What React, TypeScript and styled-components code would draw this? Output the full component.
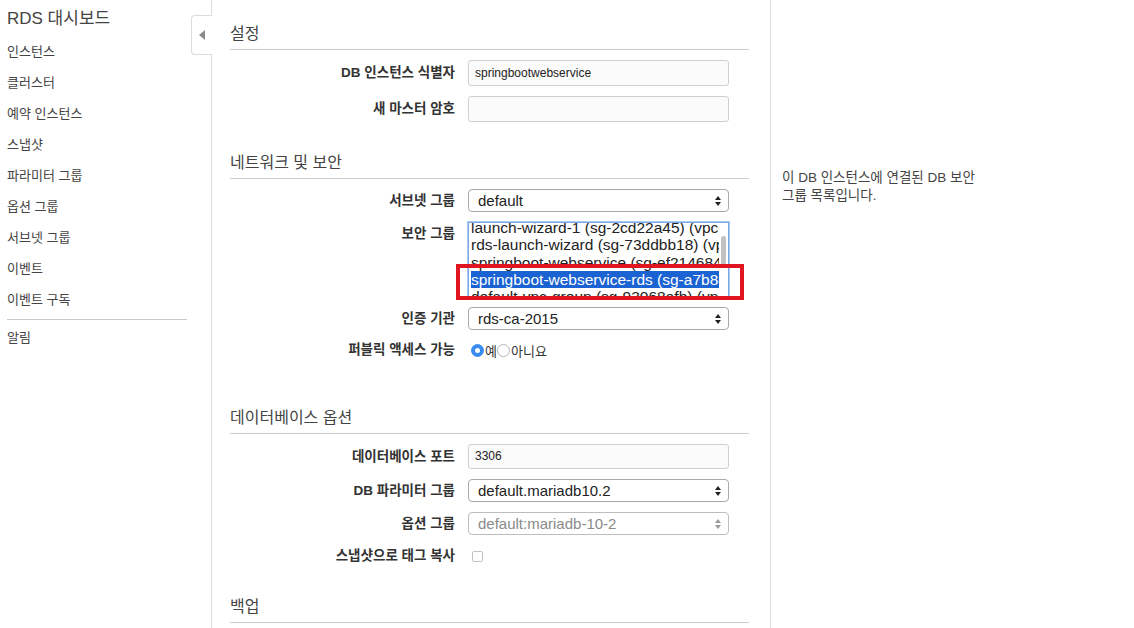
import React from "react";
import styled, { createGlobalStyle } from "styled-components";

const GlobalStyle = createGlobalStyle`
  html, body {
    margin: 0;
    padding: 0;
    background: #ffffff;
  }
  body {
    font-family: "Liberation Sans", "Noto Sans CJK KR", Arial, sans-serif;
    color: #333333;
  }
`;

const Page = styled.div`
  display: flex;
  height: 628px;
  overflow: hidden;
`;

const Sidebar = styled.nav`
  width: 180px;
  flex-shrink: 0;
  padding: 9px 4px 0 7px;
`;

const SideTitle = styled.div`
  font-size: 17px;
  line-height: 20px;
  color: #444;
  margin-bottom: 7px;
`;

const SideItem = styled.div`
  font-size: 13px;
  line-height: 31px;
  color: #444;
`;

const SideDivider = styled.hr`
  border: none;
  border-top: 1px solid #c8c8c8;
  margin: 4px 0 2px 0;
`;

const Main = styled.main`
  position: relative;
  width: 519px;
  flex-shrink: 0;
  margin-left: 20px;
  padding: 23px 21px 0 18px;
  border-left: 1px solid #dcdcdc;
  border-right: 1px solid #dcdcdc;
`;

const CollapseTab = styled.div`
  position: absolute;
  left: -21px;
  top: 15px;
  width: 20px;
  height: 38px;
  background: #fff;
  border: 1px solid #dcdcdc;
  border-right: none;
  border-radius: 4px 0 0 4px;
  display: flex;
  align-items: center;
  justify-content: center;
`;

const Section = styled.section<{ $top?: number }>`
  margin-top: ${(p) => p.$top ?? 0}px;
`;

const SectionTitle = styled.h2`
  margin: 0 0 10px 0;
  font-size: 16px;
  line-height: 22px;
  font-weight: normal;
  color: #444;
  padding-bottom: 4px;
  border-bottom: 1px solid #cccccc;
`;

const Row = styled.div`
  display: flex;
  align-items: flex-start;
  margin-bottom: 10px;
`;

const Label = styled.label<{ $lh?: number }>`
  width: 225px;
  flex-shrink: 0;
  margin-right: 13px;
  text-align: right;
  font-size: 13.5px;
  font-weight: bold;
  color: #333;
  line-height: ${(p) => p.$lh ?? 24}px;
`;

const TextInput = styled.div<{ $h?: number }>`
  box-sizing: border-box;
  width: 261px;
  height: ${(p) => p.$h ?? 26}px;
  border: 1px solid #cfcfcf;
  border-radius: 3px;
  background: #fbfbfb;
  font-size: 12px;
  line-height: ${(p) => (p.$h ?? 26) - 2}px;
  padding: 0 6px;
  color: #222;
`;

const SelectBox = styled.div<{ $disabled?: boolean }>`
  box-sizing: border-box;
  width: 261px;
  height: 23px;
  border: 1px solid ${(p) => (p.$disabled ? "#bdbdbd" : "#a9a9a9")};
  border-radius: 4px;
  background: #fff;
  display: flex;
  align-items: center;
  justify-content: space-between;
  padding: 0 6px 0 9px;
  font-size: 15px;
  color: ${(p) => (p.$disabled ? "#8a8a8a" : "#222")};
`;

const ListWrap = styled.div`
  position: relative;
`;

const ListBox = styled.div`
  box-sizing: border-box;
  width: 261px;
  height: 75px;
  border: 1px solid #7ea9e6;
  box-shadow: 0 0 0 1px #a9c8f2;
  background: #fff;
  overflow: hidden;
  position: relative;
  padding-left: 2px;
`;

const ListInner = styled.div`
  margin-top: -4px;
`;

const ListItem = styled.div<{ $selected?: boolean }>`
  height: 17.3px;
  line-height: 17.3px;
  width: 248px;
  font-size: 15.5px;
  white-space: nowrap;
  overflow: hidden;
  color: ${(p) => (p.$selected ? "#fff" : "#222")};
  background: ${(p) => (p.$selected ? "#1b63d3" : "transparent")};
`;

const ScrollThumb = styled.div`
  position: absolute;
  right: 2px;
  top: 13px;
  width: 5px;
  height: 29px;
  border-radius: 3px;
  background: #c2c2c2;
`;

const Highlight = styled.div`
  position: absolute;
  left: -12px;
  top: 42px;
  width: 288px;
  height: 36px;
  box-sizing: border-box;
  border: 4px solid #e1151f;
  pointer-events: none;
`;

const RadioGroup = styled.div`
  display: flex;
  align-items: center;
  height: 18px;
  font-size: 13px;
  color: #333;
  padding-left: 3px;
  margin-top: 1px;
`;

const Radio = styled.span<{ $checked?: boolean }>`
  box-sizing: border-box;
  width: 13px;
  height: 13px;
  border-radius: 50%;
  margin-right: 1px;
  display: inline-flex;
  align-items: center;
  justify-content: center;
  border: 1px solid ${(p) => (p.$checked ? "#3a8bf0" : "#b5b5b5")};
  background: ${(p) => (p.$checked ? "#3a8bf0" : "#fff")};
  &::after {
    content: "";
    display: ${(p) => (p.$checked ? "block" : "none")};
    width: 5px;
    height: 5px;
    border-radius: 50%;
    background: #fff;
  }
`;

const Checkbox = styled.span`
  box-sizing: border-box;
  display: block;
  width: 11px;
  height: 11px;
  margin: 6px 0 0 4px;
  border: 1px solid #c2c2c2;
  border-radius: 2px;
  background: #fff;
`;

const HelpPanel = styled.aside`
  padding: 169px 0 0 11px;
`;

const HelpText = styled.p`
  margin: 0;
  font-size: 13.5px;
  line-height: 18px;
  color: #444;
`;

const Arrows = ({ disabled }: { disabled?: boolean }) => (
  <svg width="8" height="12" viewBox="0 0 8 12">
    <path d="M4 1 L7 5 L1 5 Z" fill={disabled ? "#9a9a9a" : "#222"} />
    <path d="M4 11 L7 7 L1 7 Z" fill={disabled ? "#9a9a9a" : "#222"} />
  </svg>
);

const Select = ({ value, disabled }: { value: string; disabled?: boolean }) => (
  <SelectBox $disabled={disabled}>
    <span>{value}</span>
    <Arrows disabled={disabled} />
  </SelectBox>
);

const navItems = [
  "인스턴스",
  "클러스터",
  "예약 인스턴스",
  "스냅샷",
  "파라미터 그룹",
  "옵션 그룹",
  "서브넷 그룹",
  "이벤트",
  "이벤트 구독",
];

const securityGroups = [
  "launch-wizard-1 (sg-2cd22a45) (vpc-4a6b2c23)",
  "rds-launch-wizard (sg-73ddbb18) (vpc-4a6b2c23)",
  "springboot-webservice (sg-ef214684) (vpc-4a6b2c23)",
  "springboot-webservice-rds (sg-a7b8c1cc) (vpc-4a6b2c23)",
  "default-vpc-group (sg-93068afb) (vpc-4a6b2c23)",
];

export default function App() {
  return (
    <>
      <GlobalStyle />
      <Page>
        <Sidebar>
          <SideTitle>RDS 대시보드</SideTitle>
          {navItems.map((item) => (
            <SideItem key={item}>{item}</SideItem>
          ))}
          <SideDivider />
          <SideItem>알림</SideItem>
        </Sidebar>

        <Main>
          <CollapseTab>
            <svg width="6" height="10" viewBox="0 0 6 10">
              <path d="M6 0 L0 5 L6 10 Z" fill="#8a8a8a" />
            </svg>
          </CollapseTab>

          <Section>
            <SectionTitle>설정</SectionTitle>
            <Row>
              <Label $lh={26}>DB 인스턴스 식별자</Label>
              <TextInput>springbootwebservice</TextInput>
            </Row>
            <Row>
              <Label $lh={26}>새 마스터 암호</Label>
              <TextInput />
            </Row>
          </Section>

          <Section $top={30}>
            <SectionTitle>네트워크 및 보안</SectionTitle>
            <Row>
              <Label $lh={23}>서브넷 그룹</Label>
              <Select value="default" />
            </Row>
            <Row>
              <Label $lh={24}>보안 그룹</Label>
              <ListWrap>
                <ListBox>
                  <ListInner>
                    {securityGroups.map((g, i) => (
                      <ListItem key={g} $selected={i === 3}>
                        {g}
                      </ListItem>
                    ))}
                  </ListInner>
                  <ScrollThumb />
                </ListBox>
                <Highlight />
              </ListWrap>
            </Row>
            <Row>
              <Label $lh={23}>인증 기관</Label>
              <Select value="rds-ca-2015" />
            </Row>
            <Row>
              <Label $lh={20}>퍼블릭 액세스 가능</Label>
              <RadioGroup>
                <Radio $checked />
                예
                <Radio />
                아니요
              </RadioGroup>
            </Row>
          </Section>

          <Section $top={47}>
            <SectionTitle>데이터베이스 옵션</SectionTitle>
            <Row>
              <Label $lh={25}>데이터베이스 포트</Label>
              <TextInput $h={25}>3306</TextInput>
            </Row>
            <Row>
              <Label $lh={23}>DB 파라미터 그룹</Label>
              <Select value="default.mariadb10.2" />
            </Row>
            <Row>
              <Label $lh={23}>옵션 그룹</Label>
              <Select value="default:mariadb-10-2" disabled />
            </Row>
            <Row>
              <Label $lh={22}>스냅샷으로 태그 복사</Label>
              <Checkbox />
            </Row>
          </Section>

          <Section $top={29}>
            <SectionTitle>백업</SectionTitle>
          </Section>
        </Main>

        <HelpPanel>
          <HelpText>
            이 DB 인스턴스에 연결된 DB 보안
            <br />
            그룹 목록입니다.
          </HelpText>
        </HelpPanel>
      </Page>
    </>
  );
}
